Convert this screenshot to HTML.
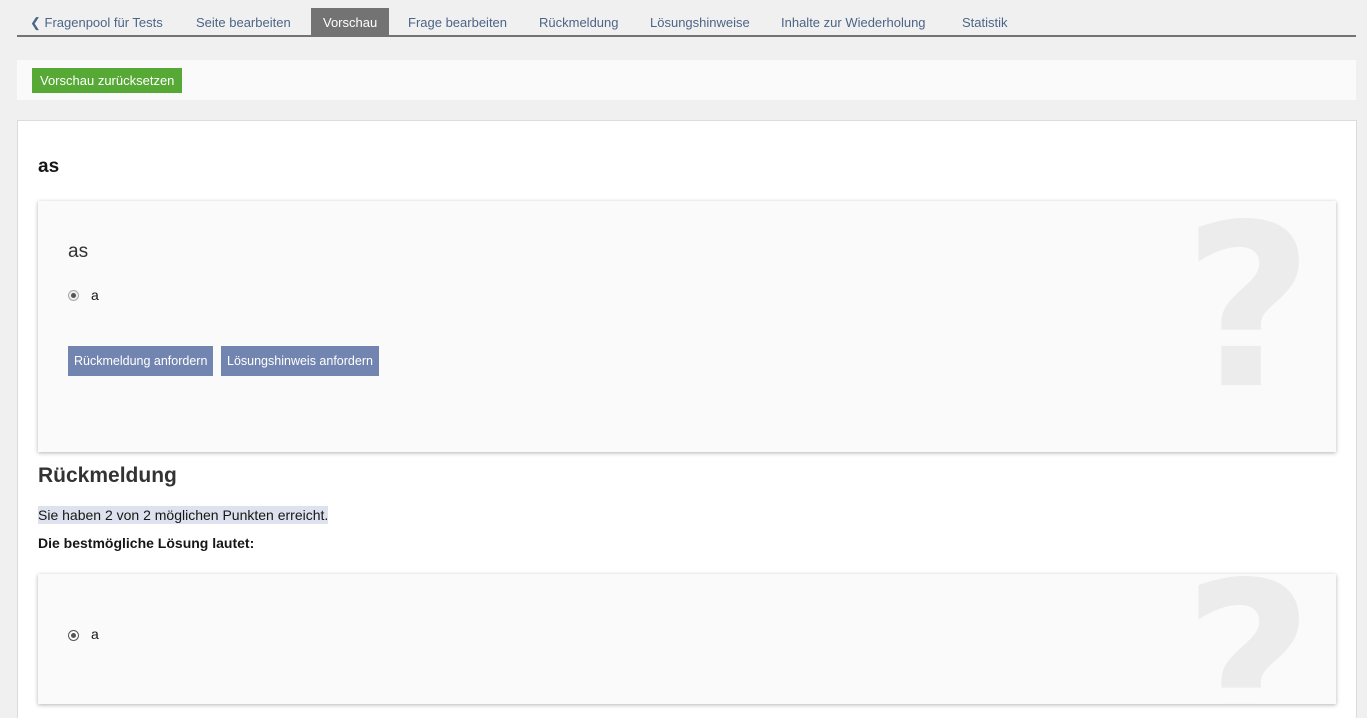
<!DOCTYPE html>
<html><head><meta charset="utf-8"><style>
html,body{margin:0;height:718px;overflow:hidden}
body{background:#f0f0f0;font-family:"Liberation Sans",sans-serif;width:1367px;position:relative;color:#161616}
.tabs{position:absolute;left:17px;top:8px;width:1339px;height:27px;border-bottom:2px solid #737373}
.tab{position:absolute;top:0;height:27px;line-height:29px;font-size:13px;color:#4c6586}
.tab.act{background:#737373;color:#fff;padding:0 12px}
.tb{position:absolute;left:17px;top:60px;width:1339px;height:40px;background:#fafafa}
.green{position:absolute;left:15px;top:8px;height:25px;line-height:25px;padding:0 8px;background:#55a934;color:#fff;font-size:13px}
.main{position:absolute;left:17px;top:120px;width:1338px;height:610px;background:#fff;border:1px solid #dcdcdc}
.card{position:absolute;left:20px;width:1298px;background:#fafafa;box-shadow:0 1px 4px rgba(0,0,0,.3)}
.q{position:absolute;font-family:"DejaVu Sans",sans-serif;font-weight:bold;font-size:225px;color:#ececec;line-height:1}
.radio{position:absolute;width:9px;height:9px;border:1px solid #aaa;border-radius:50%;background:#eee}
.radio:after{content:"";position:absolute;left:2px;top:2px;width:5px;height:5px;border-radius:50%;background:#555}
.btn{position:absolute;top:145px;height:30px;line-height:30px;background:#7285b1;color:#fff;font-size:12.5px;padding:0 6px}
</style></head><body>
<div class="tabs">
<div class="tab" style="left:13px">&#10094; Fragenpool für Tests</div>
<div class="tab" style="left:179px">Seite bearbeiten</div>
<div class="tab act" style="left:294px">Vorschau</div>
<div class="tab" style="left:391px">Frage bearbeiten</div>
<div class="tab" style="left:522px">Rückmeldung</div>
<div class="tab" style="left:633px">Lösungshinweise</div>
<div class="tab" style="left:764px">Inhalte zur Wiederholung</div>
<div class="tab" style="left:945px">Statistik</div>
</div>
<div class="tb"><div class="green">Vorschau zurücksetzen</div></div>
<div class="main">
<div style="position:absolute;left:20px;top:35px;font-size:19px;font-weight:bold">as</div>
<div class="card" style="top:80px;height:251px;overflow:hidden">
<div class="q" style="left:1145px;top:-5px">?</div>
<div style="position:absolute;left:30px;top:40px;font-size:19px;color:#333">as</div>
<div class="radio" style="left:30px;top:89px"></div>
<div style="position:absolute;left:53px;top:86px;font-size:14px">a</div>
<div class="btn" style="left:30px">Rückmeldung anfordern</div>
<div class="btn" style="left:183px">Lösungshinweis anfordern</div>
</div>
<div style="position:absolute;left:20px;top:343px;font-size:21px;font-weight:bold;color:#333">Rückmeldung</div>
<div style="position:absolute;left:20px;top:385px;font-size:14px;background:#dde2ee;padding:1px 0">Sie haben 2 von 2 möglichen Punkten erreicht.</div>
<div style="position:absolute;left:20px;top:414px;font-size:14px;font-weight:bold">Die bestmögliche Lösung lautet:</div>
<div class="card" style="top:453px;height:130px">
<div class="q" style="left:1145px;top:-20px;height:150px;overflow:hidden">?</div>
<div class="radio" style="left:30px;top:56px;background:#fff;border-color:#555"></div>
<div style="position:absolute;left:53px;top:52px;font-size:14px">a</div>
</div>
</div>
</body></html>
